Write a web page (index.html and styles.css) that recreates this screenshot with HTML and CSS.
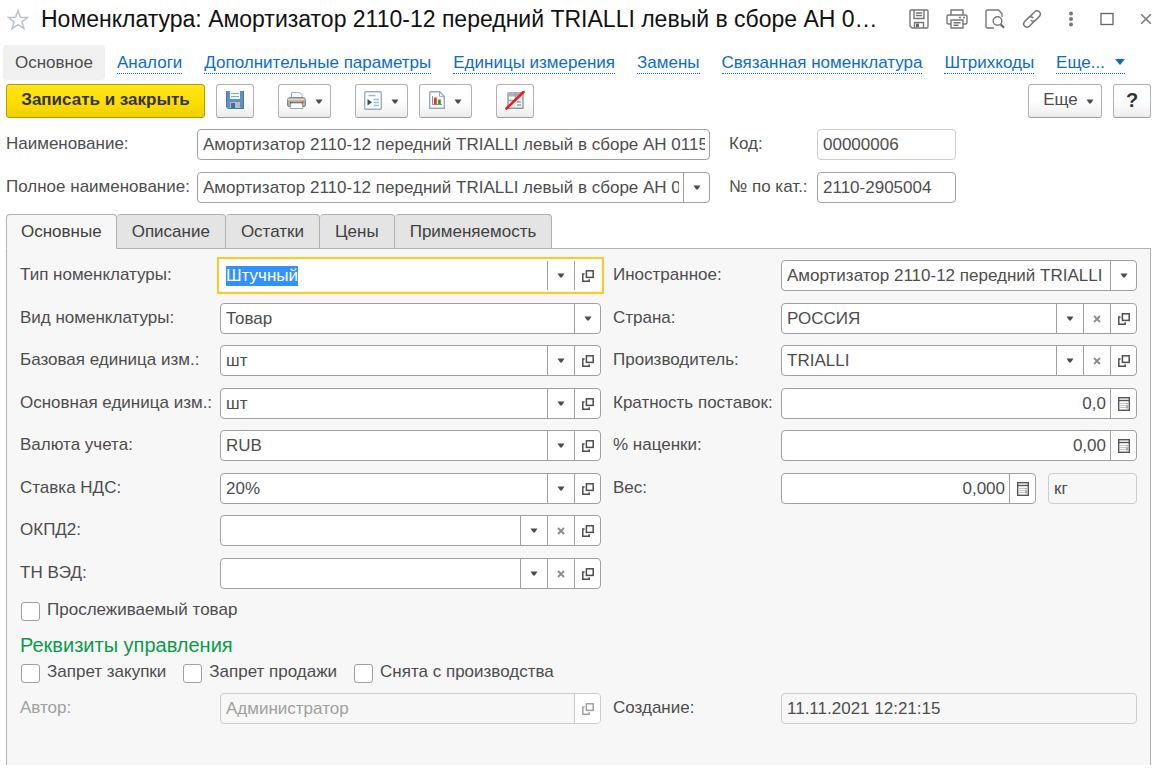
FILE: index.html
```html
<!DOCTYPE html>
<html lang="ru">
<head>
<meta charset="utf-8">
<title>Номенклатура</title>
<link rel="stylesheet" href="styles.css">
</head>
<body>
<svg class="sprite" aria-hidden="true">
  <symbol id="i-down" viewBox="0 0 8 5"><path d="M0.500 0.500h7L4.800 4.500H3.200z" fill="currentColor"/></symbol>
  <symbol id="i-open" viewBox="0 0 12 12"><g fill="none" stroke="currentColor" stroke-width="1.500"><rect x="4.400" y="0.800" width="6.800" height="6.600"/><path d="M2.600 4H0.800v7.200h6.400V9.200"/></g></symbol>
  <symbol id="i-clear" viewBox="0 0 8 8"><path d="M1 1l6 6M7 1L1 7" stroke="#8c8c8c" stroke-width="1.800"/></symbol>
  <symbol id="i-calc" viewBox="0 0 12 14"><rect x="0.700" y="0.700" width="10.600" height="12.600" fill="#fff" stroke="#555" stroke-width="1.400"/><path d="M1 3.500h10" stroke="#555" stroke-width="1.400"/><path d="M2.500 6.500h5M2.500 8.500h5M2.500 10.500h5" stroke="#888" stroke-width="1" stroke-dasharray="1 1"/><path d="M9 6v1.300M9 8.200v3.300" stroke="#555" stroke-width="1"/></symbol>
</svg>

<header class="titlebar">
  <button class="plain star" aria-label="В избранное"><svg width="22" height="21" viewBox="0 0 22 21"><path d="M11 1.600l2.400 6.700 7.100.2-5.600 4.300 2 6.800-5.900-4-5.900 4 2-6.800L1.500 8.500l7.100-.2z" fill="none" stroke="#bcc1c6" stroke-width="1.500"/></svg></button>
  <h1 class="title">Номенклатура: Амортизатор 2110-12 передний TRIALLI левый в сборе АН 01153</h1>
  <div class="window-tools">
    <button class="plain" aria-label="Сохранить"><svg width="20" height="20" viewBox="0 0 20 20"><g fill="none" stroke="#777" stroke-width="1.400"><path d="M1 2.200q0-1.200 1.200-1.200h15.600q1.200 0 1.200 1.200v15.600q0 1.200-1.200 1.200H3L1 17z"/><path d="M5 1v8.500h10V1M6.800 4h6.400M6.800 6.500h6.400M5.500 19v-5.500h9V19"/></g><path d="M7 14.500h3V18H7z" fill="#666"/></svg></button>
    <button class="plain" aria-label="Печать"><svg width="22" height="20" viewBox="0 0 22 20"><g fill="none" stroke="#777" stroke-width="1.400"><path d="M5 6V1h12v5M5 15H2.500Q1 15 1 13.500v-6Q1 6 2.500 6h17Q21 6 21 7.500v6q0 1.500-1.500 1.500H17"/><path d="M5 11h12v8H5zM7.500 13.700h7M7.500 16.300h5M13 8.500h2M17 8.500h2"/></g></svg></button>
    <button class="plain" aria-label="Предварительный просмотр"><svg width="20" height="20" viewBox="0 0 20 20"><g fill="none" stroke="#777" stroke-width="1.400"><path d="M9 19H2.500Q1 19 1 17.500v-15Q1 1 2.500 1h11L17 4.500V8"/><circle cx="12.500" cy="12" r="4.300"/></g><path d="M15.500 15.200l3.500 3.600" stroke="#666" stroke-width="2"/></svg></button>
    <button class="plain" aria-label="Ссылка"><svg width="20" height="20" viewBox="0 0 20 20"><g fill="none" stroke="#777" stroke-width="1.500" stroke-linecap="round"><path d="M8 7.500l4.700-4.800q2.200-2 4.500 0t.3 4.500l-3.700 3.900q-2.300 2-4.600.4"/><path d="M12 12.500l-4.700 4.800q-2.200 2-4.500 0t-.3-4.500l3.700-3.900q2.300-2 4.600-.4"/></g></svg></button>
    <button class="plain" aria-label="Меню"><svg width="6" height="16" viewBox="0 0 6 16"><g fill="#777"><circle cx="3" cy="2.500" r="2"/><circle cx="3" cy="8" r="2"/><circle cx="3" cy="13.500" r="2"/></g></svg></button>
    <button class="plain" aria-label="Развернуть"><svg width="14" height="14" viewBox="0 0 14 14"><rect x="1" y="1.500" width="12" height="11" fill="none" stroke="#666" stroke-width="1.300"/></svg></button>
    <button class="plain" aria-label="Закрыть"><svg width="12" height="12" viewBox="0 0 12 12"><path d="M1.200 1.200l9.600 9.600M10.800 1.200l-9.600 9.600" stroke="#777" stroke-width="1.500"/></svg></button>
  </div>
</header>

<nav class="nav">
  <span class="nav-current">Основное</span>
  <a href="#">Аналоги</a>
  <a href="#">Дополнительные параметры</a>
  <a href="#">Единицы измерения</a>
  <a href="#">Замены</a>
  <a href="#">Связанная номенклатура</a>
  <a href="#">Штрихкоды</a>
  <a href="#" class="nav-more">Еще... <svg width="10" height="6" viewBox="0 0 10 6"><path d="M0 0h10L5 6z" fill="#0a6ccf"/></svg></a>
</nav>

<div class="toolbar">
  <button class="btn btn-primary">Записать и закрыть</button>
  <button class="btn btn-icon" aria-label="Записать"><svg width="18" height="18" viewBox="0 0 18 18"><path d="M0 0h18v18H2l-2-2z" fill="#5f92c4"/><path d="M0 0h1v16H0zM17 0h1v18h-1zM2 17h15v1H2z" fill="#447aab"/><path d="M4 0h10v8H4z" fill="#f5f9fd"/><path d="M5 2.500h8M5 5.500h8" stroke="#7fa9d6" stroke-width="1"/><path d="M4 11h10v6H4z" fill="#b4bcc0"/><path d="M5 12h4v5H5z" fill="#456f98"/></svg></button>
  <button class="btn btn-menu group" aria-label="Печать"><svg width="19" height="17" viewBox="0 0 19 17"><path d="M4.500 6V.6h8l2.500 2V6" fill="#fff" stroke="#8eb0d6"/><path d="M3 5.500h13q2.500 0 2.500 3V13q0 1.500-1.500 1.500H2Q.5 14.500.5 13V8.500q0-3 2.500-3z" fill="#b5aaa2" stroke="#8a8580"/><path d="M1 7.500h16.500" stroke="#ded8d0" stroke-width="1.500"/><path d="M3 10h13v2.500H3z" fill="#4e4a47"/><path d="M4 11h11l1 5.500H3z" fill="#fff" stroke="#a5a5a5"/><path d="M15 9h2v1.500h-2z" fill="#f36b20"/></svg><svg class="caret" width="8" height="5"><use href="#i-down"/></svg></button>
  <button class="btn btn-menu group" aria-label="Создать на основании"><svg width="18" height="19" viewBox="0 0 18 19"><rect x="0.700" y="0.700" width="16.600" height="17.600" rx="1" fill="#fff" stroke="#93b1cb" stroke-width="1.400"/><path d="M4.500 4.500h7M9.500 8.500H15M9.500 11.500H15M9.500 14.500H15" stroke="#9ebbd1" stroke-width="1.300"/><path d="M3.500 8v6.500L8 11.200z" fill="#424c55"/></svg><svg class="caret" width="8" height="5"><use href="#i-down"/></svg></button>
  <button class="btn btn-menu" aria-label="Отчеты"><svg width="16" height="18" viewBox="0 0 16 18"><path d="M1.700.7h9l4.600 4.500v12.100H.7V1.700q0-1 1-1z" fill="#fff" stroke="#9aa9b5" stroke-width="1.400"/><path d="M10.500.8v4.600h4.700" fill="none" stroke="#9aa9b5"/><path d="M3.500 5v8.500H13" fill="none" stroke="#8c8c8c"/><path d="M5 6.500h2.800V13H5z" fill="#ef3030"/><path d="M9 8.500h2.800V13H9z" fill="#27a52e"/></svg><svg class="caret" width="8" height="5"><use href="#i-down"/></svg></button>
  <button class="btn btn-icon group" aria-label="Очистить"><svg width="20" height="19" viewBox="0 0 20 19"><path d="M3 2h15v15.300H3z" fill="#f5f7f8" stroke="#8e9ba5" stroke-width="1.400"/><path d="M3 2h15v3.500H3z" fill="#a9b3ba"/><path d="M10.500 2v8M3 9.500h8M12 11h4M12 14h4" stroke="#97a3ac" stroke-width="1.400"/><path d="M1.500 17.500L18.500 1" stroke="#ef1b1b" stroke-width="2.600" stroke-linecap="round"/></svg></button>
  <button class="btn btn-more">Еще <svg class="caret" width="8" height="5"><use href="#i-down"/></svg></button>
  <button class="btn btn-help">?</button>
</div>

<section class="head-form">
  <label for="name">Наименование:</label>
  <div class="field"><input id="name" value="Амортизатор 2110-12 передний TRIALLI левый в сборе АН 01153"></div>
  <label class="second" for="code">Код:</label>
  <div class="field readonly"><input id="code" value="00000006" readonly></div>
  <label for="fullname">Полное наименование:</label>
  <div class="field"><input id="fullname" value="Амортизатор 2110-12 передний TRIALLI левый в сборе АН 01153"><button aria-label="Выбрать"><svg width="8" height="5"><use href="#i-down"/></svg></button></div>
  <label class="second" for="cat">№ по кат.:</label>
  <div class="field"><input id="cat" value="2110-2905004"></div>
</section>

<div class="tabs" role="tablist">
  <button role="tab" class="tab active" aria-selected="true">Основные</button>
  <button role="tab" class="tab">Описание</button>
  <button role="tab" class="tab">Остатки</button>
  <button role="tab" class="tab">Цены</button>
  <button role="tab" class="tab">Применяемость</button>
</div>

<main class="panel">
  <div class="grid rows">
    <label for="type">Тип номенклатуры:</label>
    <div class="field focused"><input id="type" value="Штучный"><button aria-label="Выбрать"><svg width="8" height="5"><use href="#i-down"/></svg></button><button aria-label="Открыть"><svg width="12" height="12"><use href="#i-open"/></svg></button></div>
    <label class="second" for="foreign">Иностранное:</label>
    <div class="field"><input id="foreign" value="Амортизатор 2110-12 передний TRIALLI левый"><button aria-label="Выбрать"><svg width="8" height="5"><use href="#i-down"/></svg></button></div>

    <label for="kind">Вид номенклатуры:</label>
    <div class="field"><input id="kind" value="Товар"><button aria-label="Выбрать"><svg width="8" height="5"><use href="#i-down"/></svg></button></div>
    <label class="second" for="country">Страна:</label>
    <div class="field"><input id="country" value="РОССИЯ"><button aria-label="Выбрать"><svg width="8" height="5"><use href="#i-down"/></svg></button><button aria-label="Очистить"><svg width="8" height="8"><use href="#i-clear"/></svg></button><button aria-label="Открыть"><svg width="12" height="12"><use href="#i-open"/></svg></button></div>

    <label for="base">Базовая единица изм.:</label>
    <div class="field"><input id="base" value="шт"><button aria-label="Выбрать"><svg width="8" height="5"><use href="#i-down"/></svg></button><button aria-label="Открыть"><svg width="12" height="12"><use href="#i-open"/></svg></button></div>
    <label class="second" for="maker">Производитель:</label>
    <div class="field"><input id="maker" value="TRIALLI"><button aria-label="Выбрать"><svg width="8" height="5"><use href="#i-down"/></svg></button><button aria-label="Очистить"><svg width="8" height="8"><use href="#i-clear"/></svg></button><button aria-label="Открыть"><svg width="12" height="12"><use href="#i-open"/></svg></button></div>

    <label for="main-unit">Основная единица изм.:</label>
    <div class="field"><input id="main-unit" value="шт"><button aria-label="Выбрать"><svg width="8" height="5"><use href="#i-down"/></svg></button><button aria-label="Открыть"><svg width="12" height="12"><use href="#i-open"/></svg></button></div>
    <label class="second" for="multiple">Кратность поставок:</label>
    <div class="field number"><input id="multiple" value="0,0"><button aria-label="Калькулятор"><svg width="12" height="14"><use href="#i-calc"/></svg></button></div>

    <label for="currency">Валюта учета:</label>
    <div class="field"><input id="currency" value="RUB"><button aria-label="Выбрать"><svg width="8" height="5"><use href="#i-down"/></svg></button><button aria-label="Открыть"><svg width="12" height="12"><use href="#i-open"/></svg></button></div>
    <label class="second" for="markup">% наценки:</label>
    <div class="field number"><input id="markup" value="0,00"><button aria-label="Калькулятор"><svg width="12" height="14"><use href="#i-calc"/></svg></button></div>

    <label for="vat">Ставка НДС:</label>
    <div class="field"><input id="vat" value="20%"><button aria-label="Выбрать"><svg width="8" height="5"><use href="#i-down"/></svg></button><button aria-label="Открыть"><svg width="12" height="12"><use href="#i-open"/></svg></button></div>
    <label class="second" for="weight">Вес:</label>
    <div class="pair">
      <div class="field number"><input id="weight" value="0,000"><button aria-label="Калькулятор"><svg width="12" height="14"><use href="#i-calc"/></svg></button></div>
      <div class="field readonly unit"><input value="кг" aria-label="Единица веса" readonly></div>
    </div>

    <label class="start" for="okpd">ОКПД2:</label>
    <div class="field"><input id="okpd"><button aria-label="Выбрать"><svg width="8" height="5"><use href="#i-down"/></svg></button><button aria-label="Очистить"><svg width="8" height="8"><use href="#i-clear"/></svg></button><button aria-label="Открыть"><svg width="12" height="12"><use href="#i-open"/></svg></button></div>

    <label class="start" for="tnved">ТН ВЭД:</label>
    <div class="field"><input id="tnved"><button aria-label="Выбрать"><svg width="8" height="5"><use href="#i-down"/></svg></button><button aria-label="Очистить"><svg width="8" height="8"><use href="#i-clear"/></svg></button><button aria-label="Открыть"><svg width="12" height="12"><use href="#i-open"/></svg></button></div>
  </div>

  <div class="checks">
    <label class="check"><input type="checkbox">Прослеживаемый товар</label>
  </div>
  <h2 class="group-title">Реквизиты управления</h2>
  <div class="checks">
    <label class="check"><input type="checkbox">Запрет закупки</label>
    <label class="check"><input type="checkbox">Запрет продажи</label>
    <label class="check"><input type="checkbox">Снята с производства</label>
  </div>

  <div class="grid">
    <label class="muted" for="author">Автор:</label>
    <div class="field readonly muted"><input id="author" value="Администратор" readonly><button aria-label="Открыть"><svg width="12" height="12"><use href="#i-open"/></svg></button></div>
    <label class="second" for="created">Создание:</label>
    <div class="field readonly"><input id="created" value="11.11.2021 12:21:15" readonly></div>
  </div>
</main>
<script src="main.js"></script>
</body>
</html>
```
FILE: styles.css
```css
* { box-sizing: border-box; }

body {
  margin: 0;
  min-height: 100vh;
  display: flex;
  flex-direction: column;
  padding-bottom: 11px;
  background: #fff;
  color: #4d4d4d;
  font: 17px/20px "Liberation Sans", Arial, sans-serif;
}

button, input { font: inherit; color: inherit; }
button { padding: 0; cursor: pointer; }
svg { display: block; flex: none; }
.sprite { position: absolute; width: 0; height: 0; }
.plain { border: 0; background: none; }

.titlebar {
  display: flex;
  align-items: center;
  height: 38px;
  padding: 0 14px 0 7px;
}
.title {
  flex: 1;
  min-width: 0;
  margin: 0 26px 0 12px;
  overflow: hidden;
  white-space: nowrap;
  text-overflow: ellipsis;
  font-size: 23px;
  line-height: 30px;
  font-weight: 400;
  color: #111;
}
.window-tools { display: flex; align-items: center; gap: 17px; }
.window-tools button:nth-child(n + 5) { margin-left: 9px; }

.nav {
  display: flex;
  align-items: center;
  gap: 22px;
  height: 35px;
  margin: 7px 3px 0;
  white-space: nowrap;
}
.nav-current {
  height: 35px;
  margin-right: -10px;
  padding: 0 12px;
  border-radius: 4px;
  background: #f0f0f0;
  line-height: 35px;
}
.nav a {
  color: #0a6ccf;
  text-decoration: none;
  border-bottom: 1px dotted #0a6ccf;
  line-height: 21px;
}
.nav .nav-more { display: flex; align-items: center; gap: 10px; }

.toolbar { display: flex; gap: 11px; margin: 4px 15px 0 6px; }
.btn {
  display: flex;
  align-items: center;
  justify-content: center;
  height: 34px;
  padding-bottom: 2px;
  border: 1px solid #b2b2b2;
  border-bottom-color: #9c9c9c;
  border-radius: 3px;
  background: linear-gradient(#fff, #fff 50%, #ededed);
}
.btn-primary {
  width: 199px;
  border-color: #b79a00;
  background: linear-gradient(#ffe51c, #ffdf00 50%, #f0d000);
  font-weight: 700;
  color: #333;
}
.btn-icon, .btn-help { width: 38px; }
.btn-menu { width: 53px; gap: 9px; }
.group { margin-left: 13px; }
.btn-more { width: 74px; margin-left: auto; gap: 8px; padding-left: 7px; }
.btn-help { font-weight: 700; font-size: 20px; color: #333; }
.caret { margin-top: 3px; color: #4d4d4d; }

.head-form {
  display: grid;
  grid-template-columns: 191px minmax(0, 1fr) 107px 139px;
  row-gap: 12px;
  margin: 11px 210px 0 6px;
}
.head-form .second { padding-left: 19px; }

label { line-height: 30px; white-space: nowrap; }

.field {
  display: flex;
  height: 31px;
  min-width: 0;
  border: 1px solid #a0a0a0;
  border-radius: 4px;
  background: #fff;
}
.field input {
  flex: 1;
  min-width: 0;
  width: 0;
  height: 29px;
  padding: 0;
  margin: 0 4px 0 5px;
  border: 0;
  outline: 0;
  background: transparent;
}
.field input::selection { background: #3390ff; color: #fff; }
.field button {
  display: flex;
  align-items: center;
  justify-content: center;
  width: 27px;
  border: 0;
  border-left: 1px solid #a0a0a0;
  background: transparent;
}
.field button:last-child { width: 26px; }
.number input { text-align: right; }
.readonly { border-color: #cdcdcd; background: transparent; }
.muted { color: #a0a0a0; }
.readonly button { border-color: #cdcdcd; background: #fff; border-radius: 0 3px 3px 0; }
.focused {
  border-color: #fff;
  border-radius: 0;
  outline: 2px solid #fbcb23;
  outline-offset: 1px;
}

.tabs { display: flex; margin: 11px 15px 0 6px; }
.tab {
  height: 35px;
  margin-bottom: -1px;
  padding: 0 15px;
  border: 1px solid #b0b0b0;
  border-left-width: 0;
  border-radius: 4px 4px 0 0;
  background: #e4e4e4;
  color: #404040;
}
.tab.active {
  padding: 0 14px;
  border-left-width: 1px;
  border-bottom-color: #f7f7f7;
  background: #f7f7f7;
  z-index: 1;
}

.panel {
  flex: 1;
  margin: 0 15px 0 6px;
  padding: 11px 13px 40px;
  border: 1px solid #b0b0b0;
  border-bottom: 0;
  background: #f7f7f7;
}
.grid {
  display: grid;
  grid-template-columns: 200px minmax(0, 381fr) 180px minmax(0, 356fr);
  align-items: start;
}
.rows { grid-template-rows: repeat(4, 43px 42px); }
.grid .second { padding-left: 12px; }
.grid .start { grid-column: 1; }
.pair { display: flex; gap: 12px; }
.pair .field { flex: 1; }
.pair .unit { flex: 0 0 89px; }

.checks { display: flex; gap: 16px; }
.check { display: flex; align-items: flex-start; gap: 7px; height: 21px; line-height: 19px; }
.check input {
  appearance: none;
  width: 19px;
  height: 19px;
  margin: 2px 0 0 1px;
  border: 1px solid #a0a0a0;
  border-radius: 3px;
  background: #fff;
}
.group-title {
  margin: 13px 0 6px;
  font-size: 20px;
  line-height: 22px;
  font-weight: 400;
  color: #0a9b4a;
}
.checks + .grid { margin-top: 10px; }
```
FILE: main.js
```js
const typeInput = document.getElementById("type");
typeInput.focus();
typeInput.select();
```
